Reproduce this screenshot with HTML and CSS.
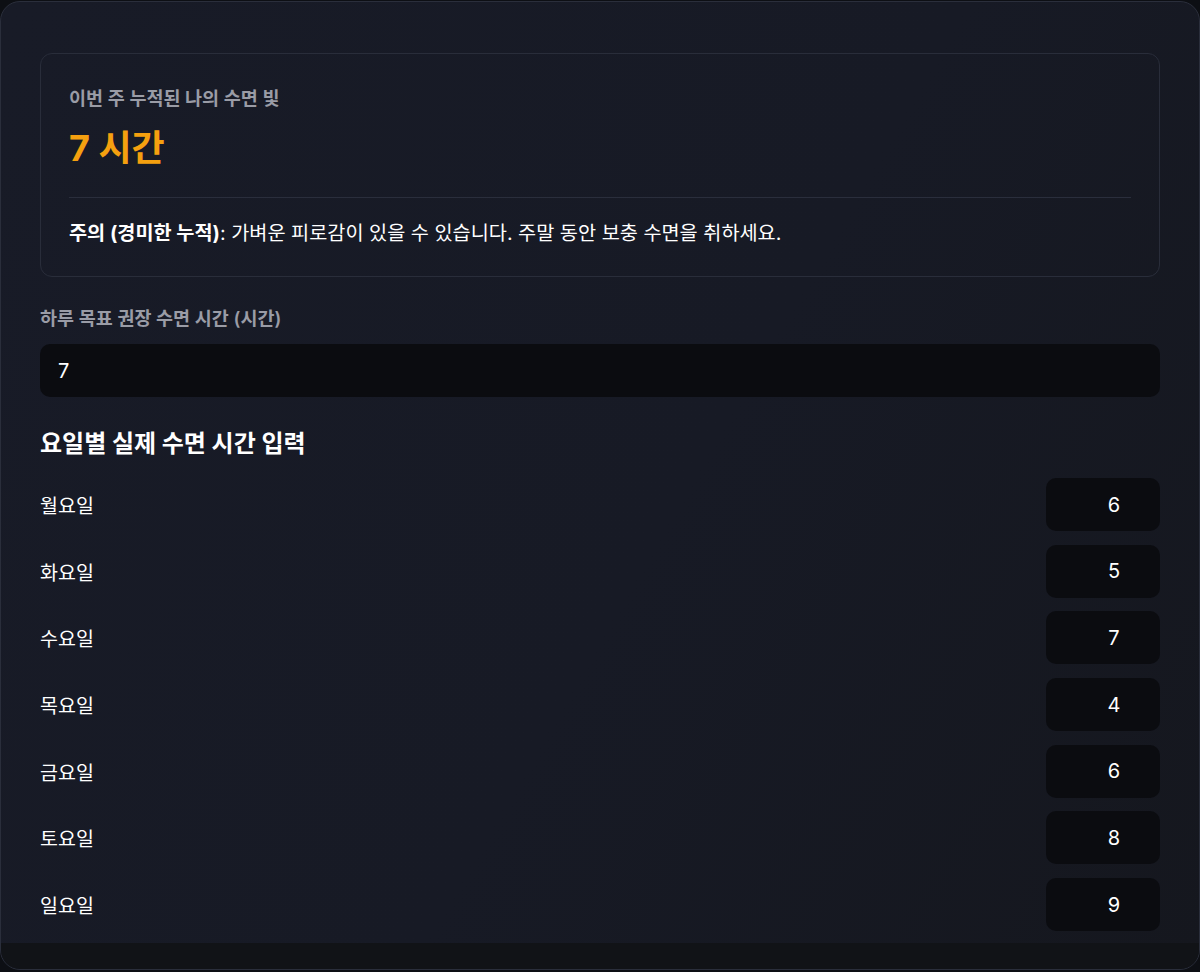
FILE: index.html
```html
<!DOCTYPE html>
<html lang="ko">
<head>
  <meta charset="UTF-8">
  <meta name="viewport" content="width=device-width, initial-scale=1.0">
  <title>수면 빚 계산기</title>
  <link rel="stylesheet" href="styles.css">
</head>
<body>
  <div class="card">
    <div class="card-body">
      <!-- 결과 요약 -->
      <section class="summary">
        <p class="summary-label">이번 주 누적된 나의 수면 빛</p>
        <p class="summary-value">7 시간</p>
        <hr class="summary-line">
        <p class="summary-note"><strong>주의 (경미한 누적)</strong>: 가벼운 피로감이 있을 수 있습니다. 주말 동안 보충 수면을 취하세요.</p>
      </section>

      <!-- 목표 시간 -->
      <label class="field-label" for="goal">하루 목표 권장 수면 시간 (시간)</label>
      <input class="goal-input" id="goal" type="text" value="7">

      <!-- 요일별 입력 -->
      <h2 class="days-title">요일별 실제 수면 시간 입력</h2>
      <div class="days">
        <div class="day"><span>월요일</span><input class="day-input" type="text" value="6"></div>
        <div class="day"><span>화요일</span><input class="day-input" type="text" value="5"></div>
        <div class="day"><span>수요일</span><input class="day-input" type="text" value="7"></div>
        <div class="day"><span>목요일</span><input class="day-input" type="text" value="4"></div>
        <div class="day"><span>금요일</span><input class="day-input" type="text" value="6"></div>
        <div class="day"><span>토요일</span><input class="day-input" type="text" value="8"></div>
        <div class="day"><span>일요일</span><input class="day-input" type="text" value="9"></div>
      </div>
    </div>
    <div class="card-foot"></div>
  </div>
</body>
</html>
```

FILE: styles.css
```css
* {
  margin: 0;
  padding: 0;
  box-sizing: border-box;
}
body {
  background: #0d0f14;
  font-family: "Inter", "Noto Sans CJK KR", sans-serif;
  color: #f3f4f6;
  padding-top: 1px;
}
.card {
  height: 969px;
  border: 1px solid #2a2e3b;
  border-radius: 20px;
  overflow: hidden;
  display: flex;
  flex-direction: column;
  background: linear-gradient(120deg, #181b27 0%, #171a25 55%, #15171e 100%);
}
.card-body {
  flex: 1;
  padding: 51px 39px 0;
}
.card-foot {
  height: 26px;
  background: #111317;
}
.summary {
  border: 1px solid #292d3a;
  border-radius: 12px;
  padding: 31px 28px 29px;
}
.summary-label {
  font-size: 18.5px;
  font-weight: 600;
  color: #9a9ca6;
  line-height: 26px;
}
.summary-value {
  margin-top: 15px;
  font-size: 36px;
  font-weight: 700;
  color: #f5a00f;
  line-height: 44px;
}
.summary-line {
  border: 0;
  border-top: 1px solid #2a2e3c;
  margin: 27px 0 21px;
}
.summary-note {
  font-size: 19.7px;
  line-height: 28px;
  color: #fff;
}
.summary-note strong {
  font-weight: 700;
}
.field-label {
  display: block;
  margin-top: 28px;
  font-size: 18.5px;
  font-weight: 600;
  color: #9a9ca6;
  line-height: 26px;
}
.goal-input {
  display: block;
  width: 100%;
  height: 53px;
  margin-top: 13px;
  padding: 0 18px;
  background: #0b0c10;
  border: 0;
  border-radius: 10px;
  color: #fff;
  font: inherit;
  font-size: 20px;
  outline: none;
}
.days-title {
  margin-top: 31px;
  font-size: 24px;
  font-weight: 700;
  line-height: 32px;
  color: #fff;
}
.days {
  margin-top: 18px;
  display: flex;
  flex-direction: column;
  gap: 13.7px;
}
.day {
  display: flex;
  align-items: center;
  justify-content: space-between;
  font-size: 19.5px;
  color: #fff;
}
.day-input {
  width: 114px;
  height: 53px;
  padding: 0 0 0 22px;
  background: #0b0c10;
  border: 0;
  border-radius: 10px;
  color: #fff;
  font: inherit;
  font-size: 20px;
  text-align: center;
  outline: none;
}
```
